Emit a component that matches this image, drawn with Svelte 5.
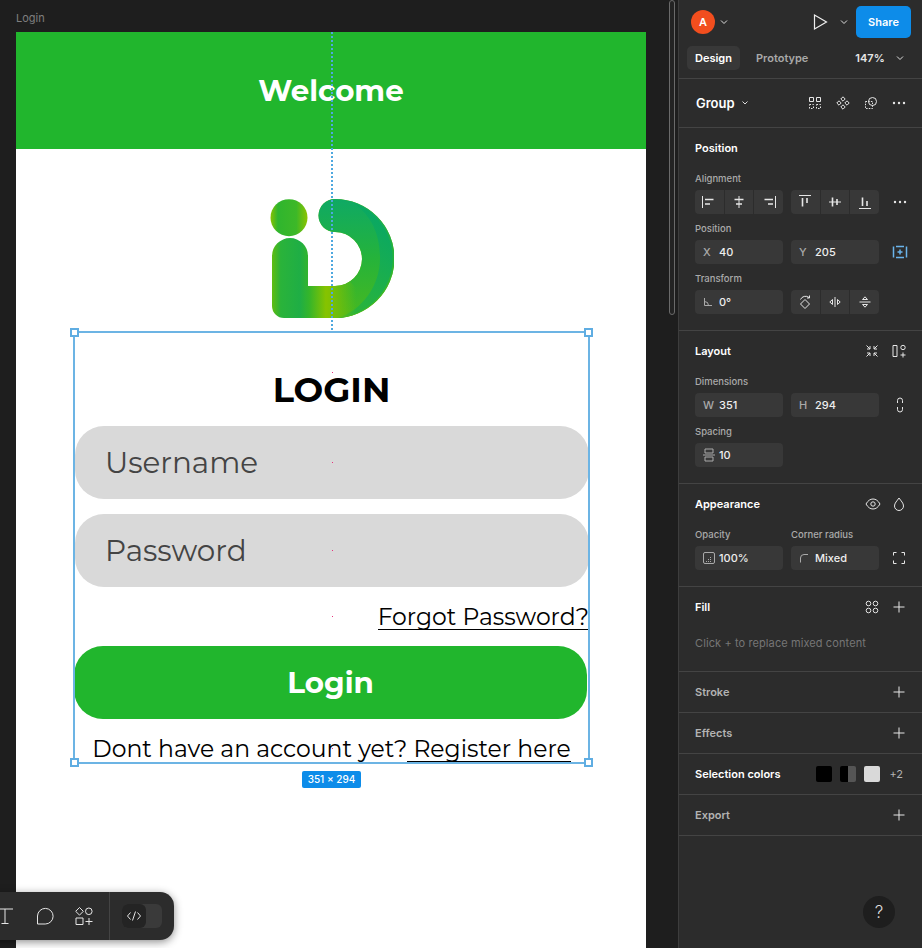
<script>
  const redDots = [372, 462, 550, 616, 748];
</script>

<div class="app">
  <main class="canvas">
    <div class="frame-label">Login</div>
    <div class="frame">
      <header class="hero">Welcome</header>
      <div class="logo-wrap">
        <svg class="logo" width="124" height="122" viewBox="270 198 124 122" aria-hidden="true">
          <defs>
            <linearGradient id="dot" x1="0" x2="1" y1="0" y2="0">
              <stop offset="0" stop-color="#86c200" /><stop offset=".2" stop-color="#2fb52e" /><stop offset=".7" stop-color="#3db828" /><stop offset="1" stop-color="#8cc400" />
            </linearGradient>
            <linearGradient id="base" gradientUnits="userSpaceOnUse" x1="272" x2="334" y1="0" y2="0">
              <stop offset="0" stop-color="#5fbc10" /><stop offset=".14" stop-color="#2ab33a" /><stop offset=".45" stop-color="#1fae45" /><stop offset=".6" stop-color="#35b52a" /><stop offset=".87" stop-color="#86c300" /><stop offset="1" stop-color="#7cc004" />
            </linearGradient>
            <linearGradient id="bend" gradientUnits="userSpaceOnUse" x1="0" x2="0" y1="199" y2="318">
              <stop offset="0" stop-color="#0fa964" /><stop offset=".5" stop-color="#25b33a" /><stop offset=".95" stop-color="#45b822" />
            </linearGradient>
            <linearGradient id="rim" gradientUnits="userSpaceOnUse" x1="340" x2="393" y1="300" y2="230">
              <stop offset="0" stop-color="#2ab43a" /><stop offset="1" stop-color="#0aa862" />
            </linearGradient>
            <linearGradient id="fade" gradientUnits="userSpaceOnUse" x1="331" x2="356" y1="0" y2="0">
              <stop offset="0" stop-color="#7cc004" /><stop offset="1" stop-color="#7cc004" stop-opacity="0" />
            </linearGradient>
          </defs>
          <circle cx="289" cy="217.7" r="18.5" fill="url(#dot)" />
          <path d="M272 256a18 18 0 0 1 36 0V286H335A27 27 0 0 0 335 232A16.5 16.5 0 0 1 335 199A59.5 59.5 0 0 1 335 318H284A12 12 0 0 1 272 306Z" fill="url(#base)" />
          <path d="M335 318A59.5 59.5 0 0 0 335 199A16.5 16.5 0 0 0 335 232A27 27 0 0 1 335 286H332V318Z" fill="url(#bend)" />
          <path d="M338 317.9A59.5 59.5 0 0 0 353 202.500C372 216 380 235 380 258C380 286 362 310 338 317.9Z" fill="url(#rim)" />
          <path d="M331 286H335A27 27 0 0 0 350 281.500L372 305A59.5 59.5 0 0 1 335 318H331Z" fill="url(#fade)" />
        </svg>
      </div>
      <form class="login">
        <h1>LOGIN</h1>
        <div class="input first">Username</div>
        <div class="input second">Password</div>
        <a class="forgot" href="#forgot">Forgot Password?</a>
        <button type="button">Login</button>
        <p>Dont have an account yet?<a href="#register">&nbsp;Register here</a></p>
      </form>
    </div>

    <div class="guide"></div>
    <div class="selection">
      <i class="handle tl"></i><i class="handle tr"></i><i class="handle bl"></i><i class="handle br"></i>
      <span class="size">351 × 294</span>
    </div>
    {#each redDots as y}
      <i class="red" style="top:{y}px"></i>
    {/each}

    <div class="scroll"></div>

    <nav class="toolbar">
      <div class="tools">
        <svg width="20" height="20" viewBox="0 0 20 20" class="ic tool"><path d="M1 3h16M9 3V17.500M5.500 17.500h7" /></svg>
        <svg width="20" height="20" viewBox="0 0 20 20" class="ic tool"><path d="M2.500 18V10a7.800 7.800 0 1 1 7.800 8Z" /></svg>
        <svg width="20" height="20" viewBox="0 0 20 20" class="ic tool"><path d="M5.500 1.500l3.800 3.800-3.800 3.800-3.800-3.800ZM2 12h7v6.500H2ZM15 12v7M11.500 15.500h7" /><circle cx="14.800" cy="5.300" r="3.300" /></svg>
      </div>
      <div class="dev">
        <div class="dev-switch">
          <span class="dev-knob">
            <svg width="16" height="16" viewBox="0 0 16 16" class="ic"><path d="M4.500 4.500 1.500 8l3 3.500M11.500 4.500l3 3.500-3 3.500M9.500 3.500l-3 9" /></svg>
          </span>
        </div>
      </div>
    </nav>
  </main>

  <aside class="panel">
    <section class="top">
      <div class="top-row">
        <span class="avatar">A</span>
        <svg class="chev" width="8" height="8" viewBox="0 0 8 8"><path d="M1 2.500 4 5.500 7 2.500" /></svg>
        <svg class="play" width="16" height="18" viewBox="0 0 16 18"><path d="M2.500 2v14L14.500 9Z" /></svg>
        <svg class="chev chev-play" width="8" height="8" viewBox="0 0 8 8"><path d="M1 2.500 4 5.500 7 2.500" /></svg>
        <span class="share">Share</span>
      </div>
      <div class="tabs">
        <span class="tab active">Design</span>
        <span class="tab">Prototype</span>
        <span class="zoom">147%</span>
        <svg class="chev" width="8" height="8" viewBox="0 0 8 8"><path d="M1 2.500 4 5.500 7 2.500" /></svg>
      </div>
    </section>

    <section class="group-row">
      <span class="group-name">Group</span>
      <svg class="chev small" width="8" height="8" viewBox="0 0 8 8"><path d="M1.500 2.500 4 5 6.500 2.500" /></svg>
      <div class="group-icons">
        <svg width="14" height="14" viewBox="0 0 14 14" class="ic"><path d="M1.500 1.500h4v4h-4ZM8.500 1.500h4v4h-4Z" /><path stroke-dasharray="1.500 1.500" d="M1.500 8.500h4v4h-4ZM8.500 8.500h4v4h-4Z" /></svg>
        <svg width="14" height="14" viewBox="0 0 14 14" class="ic"><path d="M7 .8 9.200 3 7 5.200 4.800 3ZM3 4.800 5.200 7 3 9.200.8 7ZM11 4.800 13.200 7 11 9.200 8.800 7ZM7 8.800 9.200 11 7 13.200 4.800 11Z" /></svg>
        <svg width="14" height="14" viewBox="0 0 14 14" class="ic"><circle cx="8.500" cy="5.500" r="4" /><path stroke-dasharray="1.500 1.200" d="M1.500 5.500h7v7h-7Z" /></svg>
        <svg width="14" height="14" viewBox="0 0 14 14" class="dots"><circle cx="2" cy="7" r="1.200" /><circle cx="7" cy="7" r="1.200" /><circle cx="12" cy="7" r="1.200" /></svg>
      </div>
    </section>

    <section class="block">
      <h2>Position</h2>
      <div class="label first-label">Alignment</div>
      <div class="row">
        <div class="seg">
          <span><svg width="16" height="16" viewBox="0 0 16 16" class="ic"><path d="M1.500 2v12" /><path class="thick" d="M4 5.500h8.500M4 10h5" /></svg></span>
          <span><svg width="16" height="16" viewBox="0 0 16 16" class="ic"><path d="M8 2v12" /><path class="thick" d="M3.500 5.500h9M5 10h6" /></svg></span>
          <span><svg width="16" height="16" viewBox="0 0 16 16" class="ic"><path d="M14.500 2v12" /><path class="thick" d="M3.500 5.500h8.500M7 10h5" /></svg></span>
        </div>
        <div class="seg">
          <span><svg width="16" height="16" viewBox="0 0 16 16" class="ic"><path d="M2 1.500h12" /><path class="thick" d="M5.500 4v8.500M10 4v5" /></svg></span>
          <span><svg width="16" height="16" viewBox="0 0 16 16" class="ic"><path d="M2 8h12" /><path class="thick" d="M5.500 3.500v9M10 5v6" /></svg></span>
          <span><svg width="16" height="16" viewBox="0 0 16 16" class="ic"><path d="M2 14.500h12" /><path class="thick" d="M5.500 3.500V12M10 7v5" /></svg></span>
        </div>
        <svg width="16" height="14" viewBox="0 0 14 14" class="dots tail"><circle cx="2" cy="7" r="1.200" /><circle cx="7" cy="7" r="1.200" /><circle cx="12" cy="7" r="1.200" /></svg>
      </div>
      <div class="label">Position</div>
      <div class="row">
        <div class="field"><b>X</b>40</div>
        <div class="field"><b>Y</b>205</div>
        <svg width="16" height="16" viewBox="0 0 16 16" class="ic blue tail"><path d="M1.500 2.500v11M14.500 2.500v11M4 2.500h8M4 13.500h8M8 5.500v5M5.500 8h5" /></svg>
      </div>
      <div class="label">Transform</div>
      <div class="row">
        <div class="field"><b class="glyph"><svg width="10" height="10" viewBox="0 0 10 10" class="ic dim"><path d="M1.500 1v7.500H9M1.500 4.500a4 4 0 0 1 4 4" /></svg></b>0°</div>
        <div class="seg">
          <span><svg width="16" height="16" viewBox="0 0 16 16" class="ic"><path d="M8 5.500 12.500 10 8 14.500 3.500 10ZM3.500 5.500a5.500 5.500 0 0 1 8.500-2M12.500 1.500v2.500H10" /></svg></span>
          <span><svg width="16" height="16" viewBox="0 0 16 16" class="ic"><path d="M8 3v10" /><path d="M5.500 5.500v5L2.800 8Z" /><path d="M10.500 5.500v5L13.200 8Z" /></svg></span>
          <span><svg width="16" height="16" viewBox="0 0 16 16" class="ic"><path d="M2.500 8h11M5.500 5.500h5L8 2.800ZM5.500 10.500h5L8 13.200Z" /></svg></span>
        </div>
      </div>
    </section>

    <section class="block">
      <div class="title-row">
        <h2>Layout</h2>
        <div class="title-icons">
          <svg width="14" height="14" viewBox="0 0 14 14" class="ic"><path d="M1.500 1.500 5 5M5 2v3H2M12.500 1.500 9 5M9 2v3h3M1.500 12.500 5 9M5 12V9H2M12.500 12.500 9 9M9 12V9h3" /></svg>
          <svg width="14" height="14" viewBox="0 0 14 14" class="ic"><path d="M1 1.500h4v11H1ZM11 8.500v5M8.500 11h5" /><circle cx="11" cy="3.500" r="2.200" /></svg>
        </div>
      </div>
      <div class="label first-label">Dimensions</div>
      <div class="row">
        <div class="field"><b>W</b>351</div>
        <div class="field"><b>H</b>294</div>
        <svg width="16" height="16" viewBox="0 0 16 16" class="ic tail"><path d="M5.500 6V3.500a2.500 2.500 0 0 1 5 0V6M5.500 10v2.500a2.500 2.500 0 0 0 5 0V10" /></svg>
      </div>
      <div class="label">Spacing</div>
      <div class="row">
        <div class="field"><b class="glyph"><svg width="12" height="14" viewBox="0 0 12 14" class="ic dim"><path d="M2 1h8v4H2ZM2 9h8v4H2ZM0 7h12" /></svg></b>10</div>
      </div>
    </section>

    <section class="block">
      <div class="title-row">
        <h2>Appearance</h2>
        <div class="title-icons wide">
          <svg width="16" height="14" viewBox="0 0 16 14" class="ic"><path d="M1 7c2-3.500 4.300-5 7-5s5 1.500 7 5c-2 3.500-4.300 5-7 5s-5-1.500-7-5Z" /><circle cx="8" cy="7" r="2.200" /></svg>
          <svg width="14" height="14" viewBox="0 0 14 14" class="ic"><path d="M7 1C5 4 2.500 6 2.500 9a4.500 4.500 0 0 0 9 0C11.500 6 9 4 7 1Z" /></svg>
        </div>
      </div>
      <div class="pair-labels"><span class="label">Opacity</span><span class="label">Corner radius</span></div>
      <div class="row">
        <div class="field"><b class="glyph"><svg width="12" height="12" viewBox="0 0 12 12" class="ic dim"><rect x=".5" y=".5" width="11" height="11" rx="1.500" /><path stroke-dasharray="1 1" d="M3 9.500h6M5 7.500h4M7 5.500h2" /></svg></b>100%</div>
        <div class="field"><b class="glyph"><svg width="10" height="10" viewBox="0 0 10 10" class="ic dim"><path d="M1.500 9.500V5a3.500 3.500 0 0 1 3.500-3.500h4" /></svg></b>Mixed</div>
        <svg width="14" height="14" viewBox="0 0 14 14" class="ic tail"><path d="M1.500 4.500V1.500h3M9.500 1.500h3v3M12.500 9.500v3h-3M4.500 12.500h-3v-3" /></svg>
      </div>
    </section>

    <section class="block fill">
      <div class="title-row">
        <h2>Fill</h2>
        <div class="title-icons">
          <svg width="14" height="14" viewBox="0 0 14 14" class="ic"><circle cx="3.500" cy="3.500" r="2.300" /><circle cx="10.500" cy="3.500" r="2.300" /><circle cx="3.500" cy="10.500" r="2.300" /><circle cx="10.500" cy="10.500" r="2.300" /></svg>
          <svg width="14" height="14" viewBox="0 0 14 14" class="ic"><path d="M7 1.500v11M1.500 7h11" /></svg>
        </div>
      </div>
      <div class="hint">Click + to replace mixed content</div>
    </section>

    <section class="line"><h3>Stroke</h3><svg width="14" height="14" viewBox="0 0 14 14" class="ic"><path d="M7 1.500v11M1.500 7h11" /></svg></section>
    <section class="line"><h3>Effects</h3><svg width="14" height="14" viewBox="0 0 14 14" class="ic"><path d="M7 1.500v11M1.500 7h11" /></svg></section>
    <section class="line">
      <h2>Selection colors</h2>
      <div class="swatches">
        <i class="sw black"></i><i class="sw half"></i><i class="sw light"></i><span>+2</span>
      </div>
    </section>
    <section class="line"><h3>Export</h3><svg width="14" height="14" viewBox="0 0 14 14" class="ic"><path d="M7 1.500v11M1.500 7h11" /></svg></section>

    <div class="help">?</div>
  </aside>
</div>

<style>
  :global(body) { margin: 0; background: #1e1e1e; }
  .app { display: flex; width: 922px; height: 948px; overflow: hidden; font-family: Inter, "Liberation Sans", sans-serif; }
  .canvas { position: relative; flex: 0 0 678px; height: 948px; background: #1e1e1e; overflow: hidden; padding: 32px 32px 0 16px; box-sizing: border-box; }
  .frame-label { position: absolute; left: 16px; top: 12px; font-size: 11px; line-height: 13px; color: #7f7f7f; }
  .frame { width: 630px; height: 916px; background: #fff; font-family: Montserrat, Inter, sans-serif; color: #000; }
  .hero { height: 117px; background: #21b62d; color: #fff; display: flex; align-items: center; justify-content: center; font-size: 29.3px; font-weight: 700; }
  .logo-wrap { display: flex; justify-content: center; padding: 49px 0 0 1px; height: 122px; }
  .login { display: flex; flex-direction: column; width: 515px; margin: 20px 0 0 58px; }
  h1 { margin: 0; display: flex; align-items: flex-end; justify-content: center; font-size: 35.2px; line-height: 42px; font-weight: 700; padding-bottom: 15px; box-sizing: border-box; height: 86px; }
  .input { margin-left: 1px; height: 73px; border-radius: 29px; background: #d9d9d9; color: #444; font-size: 29.4px; display: flex; align-items: center; padding-left: 30px; }
  .second { margin-top: 15px; }
  .forgot { align-self: flex-end; margin-top: 15px; height: 27px; line-height: 30px; font-size: 23.5px; color: #000; text-decoration: none; border-bottom: 1px solid #000; }
  button { margin-top: 16px; width: 513px; height: 73px; border: 0; border-radius: 29px; background: #21b62d; color: #fff; font: 700 29.4px Montserrat, Inter, sans-serif; padding: 0; }
  p { margin: 15px 0 0; height: 28px; font-size: 23.5px; line-height: 30px; text-align: center; }
  p a { display: inline-block; height: 27px; color: #000; text-decoration: none; border-bottom: 1px solid #000; }

  .guide { position: absolute; left: 331px; top: 32px; width: 2px; height: 298px; background: repeating-linear-gradient(180deg, #4fa8df 0 2px, transparent 2px 4px); }
  .selection { position: absolute; left: 73px; top: 331px; width: 517px; height: 433px; box-sizing: border-box; border: 2px solid #6cb4e4; }
  .handle { position: absolute; width: 9px; height: 9px; box-sizing: border-box; background: #fff; border: 2px solid #5fade2; }
  .tl { left: -5px; top: -5px; } .tr { right: -5px; top: -5px; } .bl { left: -5px; bottom: -5px; } .br { right: -5px; bottom: -5px; }
  .size { position: absolute; left: 227px; top: 438px; width: 59px; height: 17px; border-radius: 2px; background: #0d8ce9; color: #fff; font-size: 10px; font-weight: 500; line-height: 17px; text-align: center; white-space: nowrap; }
  .red { position: absolute; left: 332px; width: 1px; height: 1px; background: #e8327c; }
  .scroll { position: absolute; left: 669px; top: 0; width: 6px; height: 315px; box-sizing: border-box; border: 1px solid #6a6a6a; border-radius: 3px; background: #232323; }

  .toolbar { position: absolute; left: -12px; top: 892px; width: 186px; height: 48px; display: flex; background: #2c2c2c; border-radius: 0 14px 14px 0; box-shadow: 0 2px 8px rgba(0,0,0,.45); }
  .tools { display: flex; align-items: center; gap: 19px; width: 122px; padding-left: 8px; box-sizing: border-box; border-right: 1px solid #444; }
  .tools svg { flex: none; }
  .tool { stroke-width: 1.200; }
  .dev { display: flex; align-items: center; padding-left: 12px; }
  .dev-switch { width: 40px; height: 24px; background: #3a3a3a; border-radius: 6px; }
  .dev-knob { display: flex; width: 24px; height: 24px; align-items: center; justify-content: center; background: #242424; border-radius: 6px; }

  .ic { fill: none; stroke: #e6e6e6; stroke-width: 1; display: block; flex: none; }
  .ic .thick { stroke-width: 1.600; }
  .ic.dim { stroke: #aaa; }
  .ic.blue { stroke: #6ab4ec; stroke-width: 1.500; }
  .dots { fill: #e6e6e6; display: block; flex: none; }
  .chev { fill: none; stroke: #ddd; stroke-width: 1; flex: none; }
  .play { fill: none; stroke: #eee; stroke-width: 1.200; flex: none; }

  .panel { position: relative; flex: 0 0 244px; height: 948px; box-sizing: border-box; background: #2c2c2c; border-left: 1px solid #3d3d3d; color: #fff; font-size: 11px; }
  section { border-bottom: 1px solid #444; box-sizing: border-box; }
  .top { height: 79px; padding: 6px 0 0 8px; }
  .top-row { display: flex; align-items: center; height: 32px; padding-left: 4px; }
  .avatar { width: 24px; height: 24px; border-radius: 50%; background: #f24e1e; font-size: 11px; font-weight: 600; display: flex; align-items: center; justify-content: center; margin-right: 5px; }
  .play { margin-left: 84px; }
  .chev-play { margin-left: 12px; }
  .share { margin-left: 8px; width: 55px; height: 32px; background: #0d8ce9; border-radius: 5px; display: flex; align-items: center; justify-content: center; font-weight: 600; font-size: 11px; }
  .tabs { display: flex; align-items: center; height: 24px; margin-top: 8px; font-weight: 600; }
  .tab { padding: 0 8px; height: 24px; line-height: 24px; color: #a9a9a9; border-radius: 5px; margin-right: 8px; }
  .tab.active { background: #383838; color: #fff; }
  .zoom { margin-left: 31px; width: 38px; color: #e6e6e6; }
  .tabs .chev { margin-left: 3px; }
  .group-row { height: 49px; display: flex; align-items: center; padding-left: 17px; }
  .group-name { font-size: 13px; font-weight: 600; margin-right: 6px; }
  .group-icons { display: flex; gap: 14px; margin-left: auto; margin-right: 16px; }
  .block { padding: 13px 0 16px 16px; }
  h2 { margin: 0; font-size: 11px; line-height: 14px; font-weight: 600; color: #fff; }
  h3 { margin: 0; font-size: 11px; line-height: 14px; font-weight: 600; color: #b3b3b3; }
  .label { display: block; margin-top: 8px; margin-bottom: 4px; font-size: 9.500px; line-height: 14px; font-weight: 500; color: #aaa; }
  .first-label { margin-top: 17px; }
  .row { display: flex; gap: 8px; align-items: center; height: 24px; }
  .seg { display: flex; width: 88px; height: 24px; gap: 1px; }
  .seg span { flex: 1; display: flex; align-items: center; justify-content: center; background: #383838; }
  .seg span:first-child { border-radius: 4px 0 0 4px; }
  .seg span:last-child { border-radius: 0 4px 4px 0; }
  .field { width: 88px; height: 24px; box-sizing: border-box; padding-left: 8px; display: flex; align-items: center; background: #383838; border-radius: 4px; font-size: 11px; font-weight: 500; color: #eee; }
  .field b { width: 16px; flex: none; color: #a9a9a9; font-weight: 500; }
  .glyph { display: flex; }
  .tail { margin-left: 5px; }
  .title-row { display: flex; justify-content: space-between; align-items: center; height: 14px; padding-right: 16px; }
  .title-icons { display: flex; gap: 13px; }
  .title-icons.wide { gap: 11px; }
  .pair-labels { display: flex; gap: 8px; margin-top: 17px; margin-bottom: 4px; }
  .pair-labels .label { margin: 0; width: 88px; white-space: nowrap; }
  .fill { height: 85px; padding-bottom: 0; }
  .hint { margin-top: 22px; line-height: 14px; color: #767676; font-size: 11px; letter-spacing: .1px; }
  .line { height: 41px; display: flex; align-items: center; justify-content: space-between; padding: 0 16px; }
  .swatches { display: flex; align-items: center; gap: 8px; margin-right: 3px; font-size: 11px; color: #b3b3b3; }
  .sw { width: 16px; height: 16px; border-radius: 2px; }
  .black { background: #000; }
  .half { background: linear-gradient(90deg, #000 50%, #555 50%); }
  .light { background: #d9d9d9; }
  .swatches span { margin-left: 1px; }
  .help { position: absolute; left: 184px; top: 896px; width: 32px; height: 32px; border-radius: 50%; background: #1e1e1e; color: #ddd; font-size: 17px; font-weight: 300; display: flex; align-items: center; justify-content: center; }
</style>
